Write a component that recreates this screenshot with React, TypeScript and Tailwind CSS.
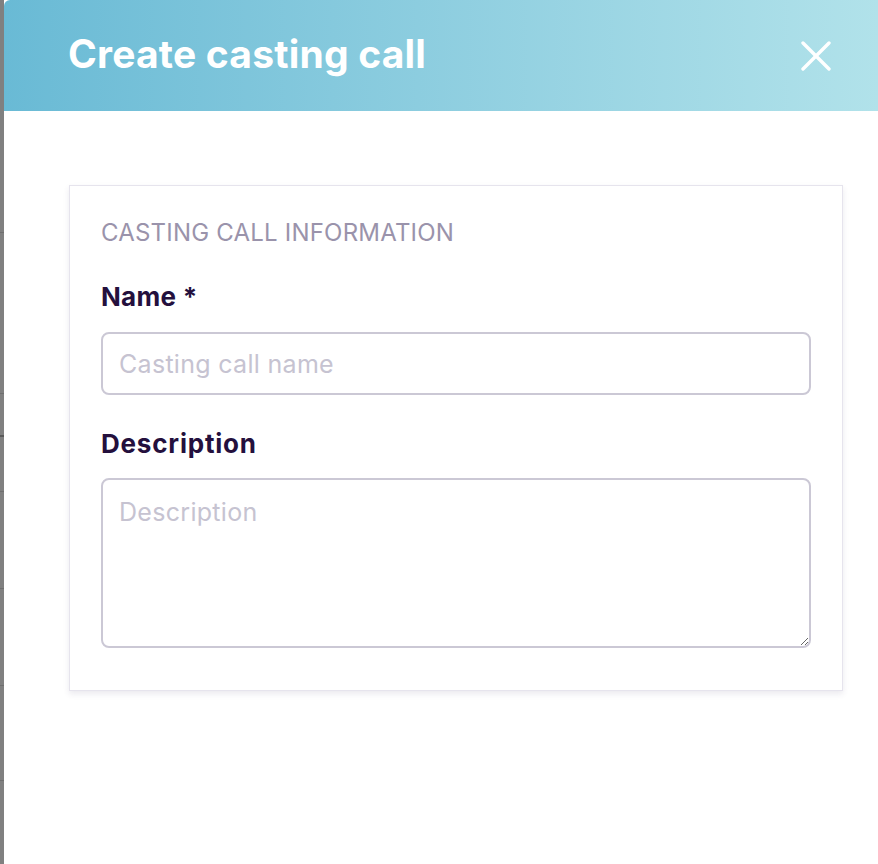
import React from "react";

export default function App() {
  return (
    <div className="flex h-[864px] w-full overflow-hidden bg-white" style={{ fontFamily: "Inter, 'Noto Sans', sans-serif" }}>
      <div className="flex w-[4px] shrink-0 flex-col bg-[#808080]">
        <div className="h-[232px]" />
        <div className="h-px bg-[#6f6f6f]" />
        <div className="h-[160px]" />
        <div className="h-px bg-[#6f6f6f]" />
        <div className="h-[41px]" />
        <div className="h-[2px] bg-[#5a5a5a]" />
        <div className="h-[54px]" />
        <div className="h-px bg-[#6f6f6f]" />
        <div className="h-[96px]" />
        <div className="h-px bg-[#6f6f6f]" />
        <div className="h-[96px]" />
        <div className="h-px bg-[#6f6f6f]" />
        <div className="h-[94px]" />
        <div className="h-px bg-[#6f6f6f]" />
      </div>
      <div className="flex min-w-0 flex-1 flex-col overflow-hidden rounded-tl-[6px] bg-white">
        <div className="flex h-[111px] shrink-0 items-center justify-between bg-gradient-to-r from-[#69bad5] to-[#b1e2ea] pl-[64px] pr-[47px]">
          <h1 className="-mt-[5px] text-[39px] font-bold leading-none tracking-[0.2px] text-white">Create casting call</h1>
          <button className="flex h-[30px] w-[30px] items-center justify-center">
            <svg width="30" height="30" viewBox="0 0 30 30" fill="none" stroke="white" strokeWidth="3.4" strokeLinecap="round">
              <path d="M2 2 L28 28" />
              <path d="M28 2 L2 28" />
            </svg>
          </button>
        </div>
        <div className="pl-[65px] pr-[35px] pt-[74px]">
          <div className="border border-[#e6e4ed] bg-white px-[31px] pb-[42px] pt-[33px] shadow-[0_3px_6px_rgba(60,50,100,0.10)]">
            <div className="text-[24px] leading-[28px] tracking-[0.2px] text-[#9a93ab]">CASTING CALL INFORMATION</div>
            <label className="mt-[35px] block text-[26px] font-bold leading-[30px] tracking-[0.3px] text-[#24103d]">Name *</label>
            <input
              className="mt-[20px] block h-[63px] w-full rounded-[8px] border-2 border-[#cbc8d5] px-[16px] text-[25px] tracking-[0.3px] text-[#24103d] outline-none placeholder:text-[#c6c3d1]"
              placeholder="Casting call name"
            />
            <label className="mt-[34px] block text-[26px] font-bold leading-[30px] tracking-[0.8px] text-[#24103d]">Description</label>
            <textarea
              className="mt-[19px] block h-[170px] w-full rounded-[8px] border-2 border-[#cbc8d5] px-[16px] py-[14px] text-[25px] tracking-[0.3px] text-[#24103d] outline-none placeholder:text-[#c6c3d1]"
              placeholder="Description"
            />
          </div>
        </div>
      </div>
    </div>
  );
}
